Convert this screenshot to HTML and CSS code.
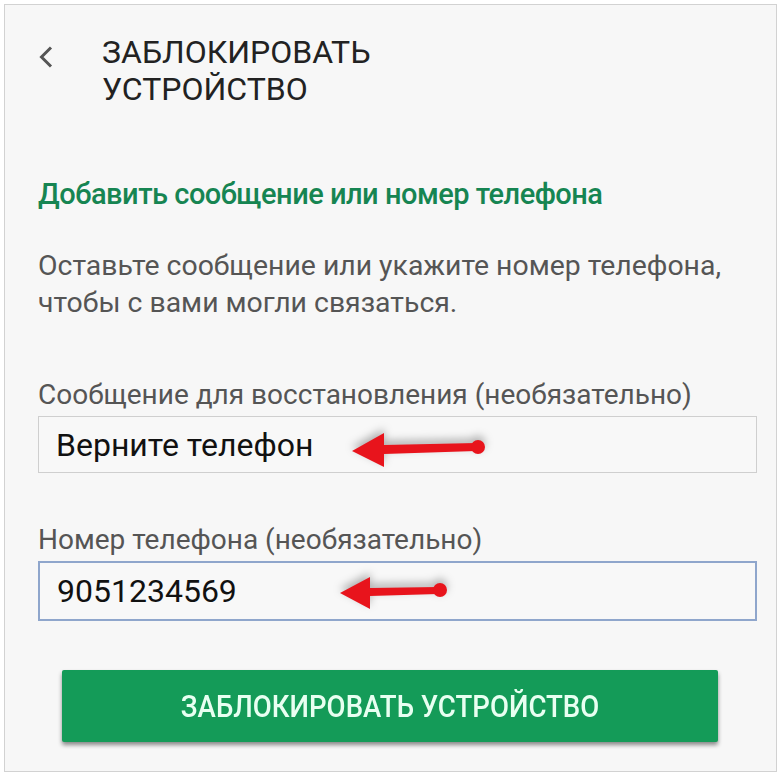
FILE: index.html
```html
<!DOCTYPE html>
<html lang="ru">
<head>
  <meta charset="UTF-8">
  <title>Заблокировать устройство</title>
  <link rel="stylesheet" href="styles.css">
</head>
<body>
  <div class="card">
    <div class="header">
      <svg class="back" width="16" height="22" viewBox="0 0 16 22">
        <path d="M13 1.5 L3.5 11 L13 20.5" fill="none" stroke="#555" stroke-width="3"/>
      </svg>
      <h1>ЗАБЛОКИРОВАТЬ<br>УСТРОЙСТВО</h1>
    </div>

    <h2>Добавить сообщение или номер телефона</h2>
    <p class="hint">Оставьте сообщение или укажите номер телефона,<br>чтобы с вами могли связаться.</p>

    <div class="field">
      <label for="msg">Сообщение для восстановления (необязательно)</label>
      <input type="text" id="msg" value="Верните телефон">
    </div>
    <div class="field">
      <label for="phone">Номер телефона (необязательно)</label>
      <input type="text" id="phone" class="focused" value="9051234569">
    </div>

    <button type="button"><span>ЗАБЛОКИРОВАТЬ УСТРОЙСТВО</span></button>

    <!-- red arrows drawn over the screenshot -->
    <svg class="arrow arrow-msg" width="150" height="50" viewBox="0 0 150 50">
      <path d="M4 27 L36 9 L36 21 L128 19 L128 27 L36 30 L36 43 Z" fill="#e8141c"/>
      <circle cx="130" cy="23" r="7" fill="#e8141c"/>
    </svg>
    <svg class="arrow arrow-phone" width="130" height="46" viewBox="0 0 130 46">
      <path d="M4 25 L34 9 L34 20 L102 19 L102 26 L34 28 L34 41 Z" fill="#e8141c"/>
      <circle cx="104" cy="22" r="7" fill="#e8141c"/>
    </svg>
  </div>
</body>
</html>
```

FILE: styles.css
```css
body {
  margin: 0;
  background: #ffffff;
  font-family: Roboto, "Liberation Sans", sans-serif;
}
/* Main panel */
.card {
  position: relative;
  margin: 4px 5px 0 4px;
  height: 766px;
  border: 1px solid #d2d2d2;
  background: #f7f7f7;
  padding: 0 19px 0 33px;
}
.header {
  display: flex;
  align-items: flex-start;
  padding-top: 29px;
}
.back {
  margin-top: 12px;
}
h1 {
  margin: 0 0 0 48px;
  font-size: 32px;
  font-weight: 400;
  line-height: 37px;
  color: #222;
}
h2 {
  margin: 70px 0 0 0;
  font-size: 29px;
  font-weight: 500;
  line-height: 32px;
  letter-spacing: -0.5px;
  color: #168552;
}
.hint {
  margin: 37px 0 0 0;
  font-size: 28.4px;
  line-height: 37px;
  color: #555;
}
.field {
  margin-top: 58px;
}
.field + .field {
  margin-top: 51px;
}
.field label {
  display: block;
  font-size: 28px;
  line-height: 32px;
  color: #555;
  margin-bottom: 5px;
}
.field input {
  display: block;
  box-sizing: border-box;
  width: 100%;
  height: 57px;
  padding: 0 17px;
  border: 1px solid #cfcfcf;
  background: #f8f8f8;
  font-family: Roboto, "Liberation Sans", sans-serif;
  font-size: 32px;
  color: #111;
  outline: none;
}
.field input.focused {
  height: 60px;
  border: 2px solid #8fa6cc;
}
button {
  display: block;
  width: 656px;
  height: 72px;
  margin: 49px 0 0 24px;
  border: none;
  border-radius: 2px;
  background: #149b58;
  box-shadow: 0 3px 4px rgba(0, 0, 0, 0.45);
  color: #e8fff1;
  font-family: Roboto, "Liberation Sans", sans-serif;
  font-size: 31px;
  font-weight: 500;
  cursor: pointer;
}
button span {
  display: inline-block;
  transform: scaleX(0.89);
}
/* Annotation arrows */
.arrow {
  position: absolute;
  filter: drop-shadow(0 -4px 4px rgba(0, 0, 0, 0.3));
}
.arrow-msg {
  left: 343px;
  top: 419px;
}
.arrow-phone {
  left: 331px;
  top: 563px;
}
```
